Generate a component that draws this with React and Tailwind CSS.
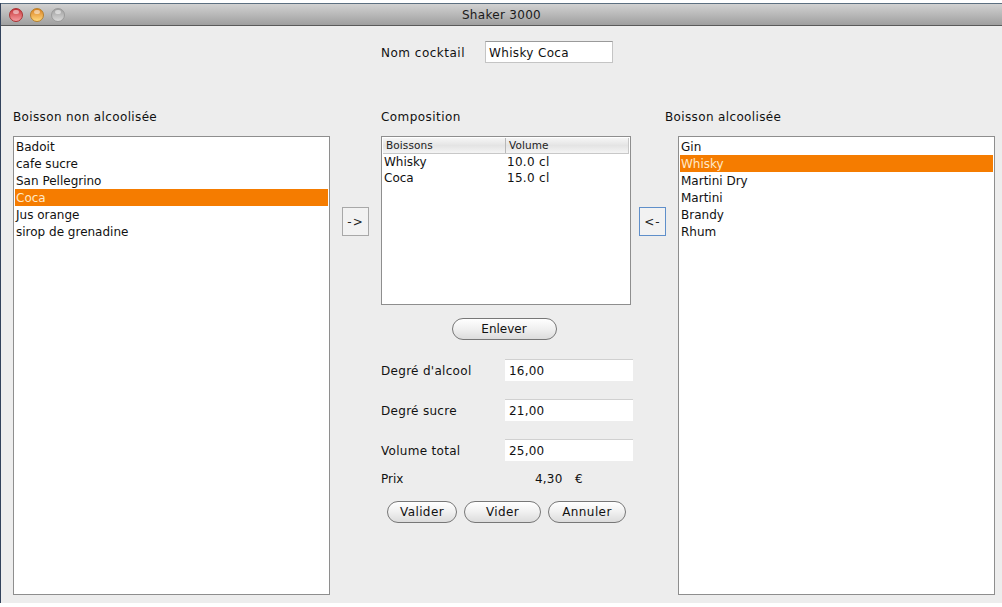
import React from 'react'

const nonAlcool = ['Badoit', 'cafe sucre', 'San Pellegrino', 'Coca', 'Jus orange', 'sirop de grenadine']
const alcool = ['Gin', 'Whisky', 'Martini Dry', 'Martini', 'Brandy', 'Rhum']

function TrafficLight({ className }) {
    return (
        <span className={`relative h-[14px] w-[14px] rounded-full border bg-gradient-to-b ${className}`}>
            <span className="absolute left-[3px] top-[1px] h-[4px] w-[6px] rounded-full bg-white/50" />
        </span>
    )
}

function DrinkList({ items, selected }) {
    return (
        <div className="mt-[10px] h-[459px] w-full border border-[#8e8e8e] bg-white px-px pt-[1px]">
            {items.map((item) => (
                <div
                    key={item}
                    className={`h-[17px] pl-[1px] text-[12px] leading-[19px] ${item === selected ? 'bg-[#f57c00] text-[#ffe9c8]' : 'text-[#111]'}`}
                >
                    {item}
                </div>
            ))}
        </div>
    )
}

function ArrowButton({ label, focused }) {
    return (
        <button className={`h-[29px] w-[27px] border bg-[#f2f2f2] text-[12px] leading-none tracking-[1px] text-[#222] ${focused ? 'border-[#5f8fca]' : 'border-[#a8a8a8]'}`}>
            {label}
        </button>
    )
}

function PillButton({ label, className }) {
    return (
        <button className={`h-[22px] rounded-full border border-[#777] bg-gradient-to-b from-white via-[#f0f0f0] to-[#dcdcdc] text-[12px] leading-none text-[#111] ${className}`}>
            {label}
        </button>
    )
}

function Field({ label, value, className }) {
    return (
        <div className={`flex h-[22px] items-center ${className}`}>
            <span className="w-[124px] pt-[2px] text-[12px] tracking-[0.3px] text-[#111]">{label}</span>
            <div className="flex h-[22px] w-[128px] items-center border-t border-[#d0d0d0] bg-white pl-[4px] text-[12px] tracking-[0.2px] text-[#111]">{value}</div>
        </div>
    )
}

export default function App() {
    return (
        <div className="h-[607px] w-[1002px] overflow-hidden bg-white pt-[3px] font-['DejaVu_Sans',sans-serif]">
            <div className="h-[600px] border-l border-l-[#33435c] bg-[#ededed]">
                <div className="relative flex h-[23px] items-center justify-center border-y border-t-[#5c6f80] border-b-[#5a5a5a] bg-gradient-to-b from-[#d2d2d2] to-[#9f9f9f] text-[12px] tracking-[0.3px] text-[#1a1a1a]">
                    <div className="absolute left-[8px] top-[4px] flex gap-[7px]">
                        <TrafficLight className="border-[#a33] from-[#c5303a] to-[#f59aa0]" />
                        <TrafficLight className="border-[#b9812a] from-[#d9801a] to-[#ffd87a]" />
                        <TrafficLight className="border-[#9a9a9a] from-[#9f9f9f] to-[#d8d8d8]" />
                    </div>
                    Shaker 3000
                </div>

                <div className="flex h-[37px] items-end pl-[380px]">
                    <span className="mb-[1px] w-[104px] text-[12px] tracking-[0.5px] text-[#111]">Nom cocktail</span>
                    <div className="flex h-[22px] w-[128px] items-center border border-[#c4c4c4] border-t-[#9a9a9a] bg-white pl-[3px] pt-[2px] text-[12px] tracking-[0.35px] text-[#111]">Whisky Coca</div>
                </div>

                <div className="mt-[45px] flex pl-[12px]">
                    <div className="w-[317px]">
                        <p className="h-[18px] text-[12px] leading-[18px] tracking-[0.36px] text-[#111]">Boisson non alcoolisée</p>
                        <DrinkList items={nonAlcool} selected="Coca" />
                    </div>

                    <div className="ml-[12px] mt-[99px] w-[27px]">
                        <ArrowButton label="->" />
                    </div>

                    <div className="ml-[12px] w-[252px]">
                        <p className="h-[18px] text-[12px] leading-[18px] tracking-[0.45px] text-[#111]">Composition</p>
                        <div className="mt-[10px] h-[169px] w-[250px] border border-[#8e8e8e] bg-white p-px">
                            <div className="flex h-[16px] border-b border-[#c8c8c8] bg-gradient-to-b from-[#f6f6f6] via-[#e4e4e4] to-[#f4f4f4] text-[10.5px] leading-[15px] tracking-[0.1px] text-[#222]">
                                <span className="w-[123px] border-r border-[#b8b8b8] pl-[3px]">Boissons</span>
                                <span className="flex-1 border-r border-[#c8c8c8] pl-[3px]">Volume</span>
                            </div>
                            {[['Whisky', '10.0 cl'], ['Coca', '15.0 cl']].map(([name, vol]) => (
                                <div key={name} className="flex h-[16px] text-[12px] leading-[16px] text-[#111]">
                                    <span className="w-[123px] pl-[1px]">{name}</span>
                                    <span className="pl-[1px] tracking-[0.3px]">{vol}</span>
                                </div>
                            ))}
                        </div>

                        <div className="mt-[13px] flex justify-center">
                            <PillButton label="Enlever" className="ml-[-6px] w-[105px]" />
                        </div>

                        <Field label="Degré d'alcool" value="16,00" className="mt-[19px]" />
                        <Field label="Degré sucre" value="21,00" className="mt-[18px]" />
                        <Field label="Volume total" value="25,00" className="mt-[18px]" />

                        <div className="mt-[9px] flex h-[18px] items-center text-[12px] text-[#111]">
                            <span className="w-[154px]">Prix</span>
                            <span className="w-[40px] tracking-[0.2px]">4,30</span>
                            <span>€</span>
                        </div>

                        <div className="mt-[13px] flex gap-[7px] pl-[6px]">
                            <PillButton label="Valider" className="w-[70px] tracking-[0.4px]" />
                            <PillButton label="Vider" className="w-[77px] tracking-[0.4px]" />
                            <PillButton label="Annuler" className="w-[78px] tracking-[0.4px]" />
                        </div>
                    </div>

                    <div className="ml-[6px] mt-[99px] w-[27px]">
                        <ArrowButton label="<-" focused />
                    </div>

                    <div className="ml-[12px] w-[317px]">
                        <p className="-ml-[13px] h-[18px] text-[12px] leading-[18px] tracking-[0.36px] text-[#111]">Boisson alcoolisée</p>
                        <DrinkList items={alcool} selected="Whisky" />
                    </div>
                </div>
            </div>
        </div>
    )
}
